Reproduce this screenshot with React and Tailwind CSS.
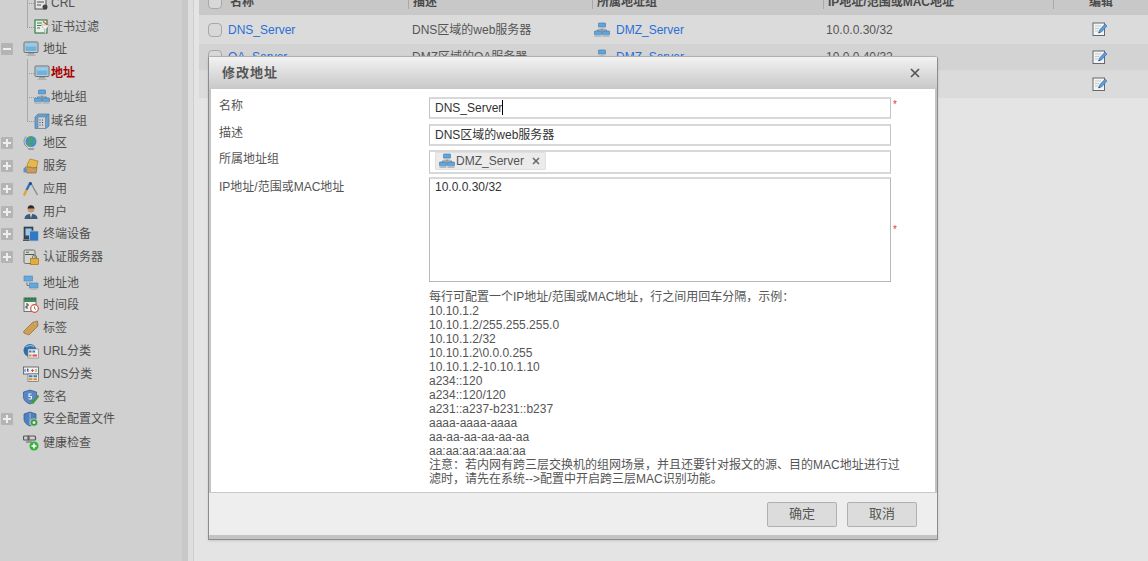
const Frame = ({ children, size = 16 }) => (
  <svg width={size} height={size} viewBox="0 0 16 16" className="shrink-0">
    {children}
  </svg>
);

const MonitorIcon = () => (
  <Frame>
    <rect x="1" y="1" width="14" height="10.500" rx="1" fill="#c8ccd0" stroke="#6b7378" />
    <rect x="2.500" y="2.500" width="11" height="7.500" fill="#6fb2dc" />
    <rect x="2.500" y="2.500" width="11" height="3" fill="#9accea" />
    <rect x="5" y="12" width="6" height="1.500" fill="#9aa0a4" />
    <rect x="3.500" y="13.500" width="9" height="1.500" fill="#aeb2b5" />
  </Frame>
);

const GroupIcon = () => (
  <Frame>
    <rect x="4.500" y="1" width="7" height="4" rx=".5" fill="#5fa6de" stroke="#41749f" strokeWidth=".6" />
    <rect x="4.500" y="5" width="7" height="1.500" fill="#b4bbc0" />
    <path d="M8 6.500v2M3.500 9V8h9v1" stroke="#6f7f8c" fill="none" />
    <rect x=".5" y="9" width="7" height="3.800" rx=".5" fill="#5fa6de" stroke="#41749f" strokeWidth=".6" />
    <rect x=".5" y="12.800" width="7" height="2.200" fill="#b4bbc0" />
    <rect x="8.500" y="9" width="7" height="3.800" rx=".5" fill="#5fa6de" stroke="#41749f" strokeWidth=".6" />
    <rect x="8.500" y="12.800" width="7" height="2.200" fill="#b4bbc0" />
  </Frame>
);

const DomainIcon = () => (
  <Frame>
    <path d="M1 4l3-3h11v12l-3 2.500H1z" fill="#6c9fcc" stroke="#4b7ba6" strokeWidth=".7" />
    <path d="M11.500 4L15 1" stroke="#4b7ba6" strokeWidth=".7" />
    <rect x="4" y="4" width="7.500" height="11.500" fill="#cdd3d8" stroke="#6f7a82" strokeWidth=".6" />
    <path d="M5.500 7h1M8 7h1M5.500 9.500h1M8 9.500h1M5.500 12h1M8 12h1" stroke="#444" />
  </Frame>
);

const GlobeIcon = () => (
  <Frame>
    <circle cx="8" cy="6.500" r="5.500" fill="#3f8fc9" />
    <path d="M5 3c2-1 3 0 3 2s-3 1-3 3 2 2 3 3M10 4c1.500 1 2 2 1 4" stroke="#5fa542" strokeWidth="1.700" fill="none" />
    <path d="M3 1.500a7 7 0 0 0 1.500 11" stroke="#8a8f93" fill="none" />
    <rect x="5" y="13" width="6" height="2" rx=".5" fill="#9c9fa2" />
  </Frame>
);

const FolderIcon = () => (
  <Frame>
    <path d="M4 7l3-6 8 2-1.500 7H5z" fill="#e6b94e" stroke="#a67c24" strokeWidth=".7" />
    <path d="M2 9h6l1 1 5-.5L13 15H4z" fill="#c99c62" stroke="#8f6a38" strokeWidth=".7" />
    <rect x=".5" y="10" width="3" height="4.500" rx=".5" fill="#5c92c4" />
  </Frame>
);

const AppIcon = () => (
  <Frame>
    <path d="M7.500 1.500L14.500 14" stroke="#8a8f93" strokeWidth="1.500" fill="none" />
    <path d="M7.500 1.500L3.500 9" stroke="#2f6fb5" strokeWidth="2.400" fill="none" />
    <path d="M3.500 9L1 14.500" stroke="#e0a52c" strokeWidth="2.400" />
    <circle cx="7.500" cy="2.500" r="1.500" fill="#1f4f8a" />
  </Frame>
);

const UserIcon = () => (
  <Frame>
    <circle cx="8" cy="5" r="3.500" fill="#c49a78" />
    <path d="M4.500 4.500C5 0 11 0 11.500 4.500z" fill="#2d2a28" />
    <path d="M1.500 15c0-4 3-5 6.500-5s6.500 1 6.500 5z" fill="#3f5b7c" />
    <path d="M7 10h2l-1 4z" fill="#e8e8e8" />
  </Frame>
);

const TerminalIcon = () => (
  <Frame>
    <rect x="1" y="1" width="9" height="12" fill="#2e4a66" stroke="#333" strokeWidth=".6" />
    <rect x="2.500" y="2.500" width="6" height="7" fill="#9ec6e4" />
    <rect x="6.500" y="5" width="9" height="10" rx="1" fill="#2f7ac2" stroke="#b4c4d0" strokeWidth=".8" />
    <rect x="0" y="13.500" width="6.500" height="1.500" fill="#555" />
  </Frame>
);

const AuthIcon = () => (
  <Frame>
    <rect x="1" y="1" width="11" height="13.500" rx="1.500" fill="#d4d6d2" stroke="#555" strokeWidth=".8" />
    <path d="M2 5.500h9" stroke="#555" />
    <path d="M3 3.300h3" stroke="#3f9a42" strokeWidth="1.200" />
    <rect x="7.500" y="9.500" width="8" height="6" fill="#e1ae33" stroke="#8f6a18" strokeWidth=".6" />
    <path d="M9.500 9.500V8a2 2 0 0 1 4 0v1.500" stroke="#777" fill="none" />
  </Frame>
);

const PoolIcon = () => (
  <Frame>
    <rect x="1" y="1" width="8.500" height="5" fill="#64a8dc" stroke="#4b84b3" strokeWidth=".6" />
    <rect x="2" y="6" width="6.500" height="1.500" fill="#b3b8bb" />
    <rect x="6.500" y="8" width="8.500" height="5" fill="#64a8dc" stroke="#4b84b3" strokeWidth=".6" />
    <rect x="7.500" y="13" width="6.500" height="2" fill="#b3b8bb" />
    <path d="M4 7.500v3h2.500" stroke="#5f7a8c" fill="none" />
  </Frame>
);

const CalendarIcon = () => (
  <Frame>
    <rect x="1" y="1" width="12" height="13.500" fill="#eef0ee" stroke="#444" strokeWidth=".7" />
    <rect x="1" y="1" width="12" height="4" fill="#3e8a58" />
    <path d="M3 2.500v-2M6 2.500v-2M9 2.500v-2M12 2.500v-2" stroke="#333" strokeWidth=".7" />
    <path d="M3 7h2v2H3v2h2" stroke="#333" fill="none" strokeWidth=".9" />
    <circle cx="11.500" cy="11.500" r="3.800" fill="#fff" stroke="#d0533c" strokeWidth="1.200" />
    <path d="M11.500 9.500v2l1.500 1" stroke="#555" fill="none" strokeWidth=".8" />
  </Frame>
);

const TagIcon = () => (
  <Frame>
    <path d="M1 11L9.500 2.500 14.500 1l.5 5-8.500 8.500a1.500 1.500 0 0 1-2 0L1 13a1.500 1.500 0 0 1 0-2z" fill="#cf9f56" stroke="#916a2c" strokeWidth=".7" />
    <circle cx="12" cy="4" r="1.200" fill="#eee" stroke="#7a5a28" strokeWidth=".5" />
  </Frame>
);

const UrlIcon = () => (
  <Frame>
    <circle cx="7" cy="7.500" r="6.500" fill="#2e6fa8" />
    <path d="M3 4c3-2 6-2 8 0" stroke="#7fb3d9" strokeWidth="1.500" fill="none" />
    <rect x="5" y="6" width="10.500" height="9" fill="#eee" stroke="#777" strokeWidth=".6" />
    <path d="M6 8.500h2.500M9.500 8.500H12" stroke="#3b7fc0" strokeWidth="2" />
    <path d="M6 12.500h2.500" stroke="#e08a2c" strokeWidth="2" />
    <path d="M9.500 12.500H14" stroke="#d9563a" strokeWidth="2" />
  </Frame>
);

const DnsIcon = () => (
  <Frame>
    <rect x=".5" y="1" width="15" height="7" fill="#f0f0f0" stroke="#444" strokeWidth=".7" />
    <path d="M2 3v3M4 3h1v3" stroke="#2f5fa8" strokeWidth=".9" />
    <path d="M8 4.500h3M9.500 3v3" stroke="#d8433a" strokeWidth=".9" />
    <path d="M13 3v3" stroke="#3f9a42" strokeWidth=".9" />
    <rect x="5" y="8" width="10.500" height="7.500" fill="#eee" stroke="#555" strokeWidth=".6" />
    <path d="M6 10.300h3.500M10.500 10.300H14" stroke="#3b7fc0" strokeWidth="2" />
    <path d="M6 13.300h3.500M10.500 13.300H14" stroke="#e08a2c" strokeWidth="2" />
  </Frame>
);

const SignIcon = () => (
  <Frame>
    <path d="M7 1l6.500 2v5c0 3.500-3.500 6-6.500 7-3-1-6.500-3.500-6.500-7V3z" fill="#5a86c6" stroke="#2f568f" strokeWidth=".7" />
    <path d="M8.500 5H6v2.500h2.500V10H5.500" stroke="#e8eef8" fill="none" strokeWidth="1.100" />
    <path d="M8 11l2 2.500L15.500 6.500" stroke="#3f9a42" strokeWidth="2.200" fill="none" />
  </Frame>
);

const ShieldIcon = () => (
  <Frame>
    <path d="M7 1l6 2v5c0 3.500-3 6-6 7-3-1-6-3.500-6-7V3z" fill="#4f7fbf" stroke="#2f568f" strokeWidth=".7" />
    <path d="M7 2v12" stroke="#9fbde3" strokeWidth="1" />
    <circle cx="11" cy="11.500" r="3.800" fill="#3a9a3f" stroke="#e8e8e8" strokeWidth=".6" />
    <circle cx="11" cy="11.500" r="1.500" fill="#e8e8e8" />
  </Frame>
);

const HealthIcon = () => (
  <Frame>
    <rect x=".5" y="1" width="5.500" height="4" rx="1" fill="none" stroke="#555" strokeWidth="1.200" />
    <rect x="5" y="1" width="7.500" height="4" rx="1" fill="none" stroke="#555" strokeWidth="1.200" />
    <path d="M3 7h6" stroke="#777" strokeWidth="1.200" />
    <circle cx="11" cy="11" r="4.500" fill="#35b03c" />
    <path d="M11 8.500v5M8.500 11h5" stroke="#fff" strokeWidth="1.600" />
  </Frame>
);

const CertIcon = () => (
  <Frame>
    <rect x="1" y="1" width="12" height="13" fill="#e8efe6" stroke="#3b7f4c" strokeWidth="1.200" />
    <path d="M3 4h5M3 6.500h4M3 9h3" stroke="#3b7f4c" />
    <path d="M7 6h8.500l-3.500 4v5l-1.500-1v-4z" fill="#f4f4f4" stroke="#888" strokeWidth=".5" />
    <path d="M9 2.500l4 3" stroke="#d8433a" strokeWidth="1.200" />
  </Frame>
);

const CrlIcon = () => (
  <Frame>
    <rect x="1" y="1" width="11" height="13" fill="#e4e4e4" stroke="#555" />
    <path d="M3 4h7M3 7h7M3 10h4" stroke="#555" />
    <circle cx="11" cy="12" r="2.500" fill="#444" />
  </Frame>
);

const EditIcon = () => (
  <svg width="16" height="16" viewBox="0 0 16 16" className="shrink-0 -mt-px">
    <rect x="1" y="2" width="11.500" height="12.500" fill="#f4f4f4" stroke="#5f6a72" />
    <path d="M3 5h6M3 7.500h4M3 10h3" stroke="#c5c8ca" />
    <path d="M6.500 12l1-3L13 3l2 2-5.500 6z" fill="#5d9ad6" stroke="#3a6ea3" strokeWidth=".6" />
    <path d="M6.500 12l1-1.200.5.700z" fill="#222" />
  </svg>
);

const Toggle = ({ open }) => (
  <span className="w-3 h-3 bg-[#b4b4b4] rounded-[1px] flex items-center justify-center relative shrink-0">
    <span className="block w-2 h-0.5 bg-[#eeeeee]" />
    {!open && <span className="absolute block w-0.5 h-2 bg-[#eeeeee]" />}
  </span>
);

const TopRow = ({ label, icon, toggle, open, mt }) => (
  <div className={`flex items-center h-5 ${mt}`}>
    <span className="w-[23px] pl-px shrink-0">{toggle && <Toggle open={open} />}</span>
    <span className="w-[20px] shrink-0">{icon}</span>
    <span>{label}</span>
  </div>
);

const ChildRow = ({ label, icon, active, last, mt }) => (
  <div className={`flex items-center h-5 pl-[27px] relative ${mt}`}>
    <span className={`w-px bg-[#a8a8a8] absolute left-[27px] -top-[4px] ${last ? "h-[14px]" : "h-6"}`} />
    <span className="w-[7px] border-t border-dotted border-[#9a9a9a] shrink-0" />
    <span className="w-[17px] shrink-0">{icon}</span>
    <span className={active ? "font-bold text-[#a80000]" : ""}>{label}</span>
  </div>
);

const lowerRows = [
  { label: "地区", icon: <GlobeIcon />, toggle: true, mt: "mt-[2px]" },
  { label: "服务", icon: <FolderIcon />, toggle: true, mt: "mt-[3px]" },
  { label: "应用", icon: <AppIcon />, toggle: true, mt: "mt-[3px]" },
  { label: "用户", icon: <UserIcon />, toggle: true, mt: "mt-[3px]" },
  { label: "终端设备", icon: <TerminalIcon />, toggle: true, mt: "mt-[2px]" },
  { label: "认证服务器", icon: <AuthIcon />, toggle: true, mt: "mt-[3px]" },
  { label: "地址池", icon: <PoolIcon />, mt: "mt-[6px]" },
  { label: "时间段", icon: <CalendarIcon />, mt: "mt-[2px]" },
  { label: "标签", icon: <TagIcon />, mt: "mt-[3px]" },
  { label: "URL分类", icon: <UrlIcon />, mt: "mt-[3px]" },
  { label: "DNS分类", icon: <DnsIcon />, mt: "mt-[3px]" },
  { label: "签名", icon: <SignIcon />, mt: "mt-[3px]" },
  { label: "安全配置文件", icon: <ShieldIcon />, toggle: true, mt: "mt-[2px]" },
  { label: "健康检查", icon: <HealthIcon />, mt: "mt-[4px]" },
];

const Sidebar = () => (
  <aside className="w-[182px] shrink-0 bg-[#d0d0d0] -mt-[7px] text-[#4f4f4f]">
    <ChildRow label="CRL" icon={<CrlIcon />} />
    <ChildRow label="证书过滤" icon={<CertIcon />} last mt="mt-[4px]" />
    <TopRow label="地址" icon={<MonitorIcon />} toggle open mt="mt-[2px]" />
    <ChildRow label="地址" icon={<MonitorIcon />} active mt="mt-[4px]" />
    <ChildRow label="地址组" icon={<GroupIcon />} mt="mt-[4px]" />
    <ChildRow label="域名组" icon={<DomainIcon />} last mt="mt-[4px]" />
    {lowerRows.map(r => (
      <TopRow key={r.label} {...r} />
    ))}
  </aside>
);

const tableRows = [
  { name: "DNS_Server", desc: "DNS区域的web服务器", group: "DMZ_Server", ip: "10.0.0.30/32", h: "h-[29px]", bg: "bg-[#dbdbdb]" },
  { name: "OA_Server", desc: "DMZ区域的OA服务器", group: "DMZ_Server", ip: "10.0.0.40/32", h: "h-[26px]", bg: "bg-[#d3d3d3]" },
  { name: "", desc: "", group: "", ip: "", h: "h-[28px]", bg: "bg-[#dbdbdb]" },
];

const Table = () => (
  <div className="ml-[5px] flex-1 min-w-0">
    <div className="flex h-[15px] items-end bg-[#c8c8c8] pb-[6px] font-bold text-[#4a4a4a] overflow-hidden">
      <span className="w-[209px] pl-[9px] flex items-center gap-2 shrink-0 leading-[14px]">
        <span className="w-[14px] h-[14px] rounded-sm border border-[#a8a8a8] bg-[#d8d8d8]" />
        名称
      </span>
      <span className="w-[184px] pl-1 border-l border-[#a8a8a8] shrink-0 leading-[14px]">描述</span>
      <span className="w-[231px] pl-1 border-l border-[#a8a8a8] shrink-0 leading-[14px]">所属地址组</span>
      <span className="w-[230px] pl-1 border-l border-[#a8a8a8] shrink-0 leading-[14px]">IP地址/范围或MAC地址</span>
      <span className="flex-1 text-center border-l border-[#a8a8a8] leading-[14px]">编辑</span>
    </div>
    {tableRows.map((r, i) => (
      <div key={i} className={`flex items-center ${r.h} ${r.bg} text-[#555555]`}>
        <span className="w-[209px] pl-[9px] flex items-center gap-[6px] shrink-0 text-[#2a6fd6]">
          {r.name && <span className="w-[14px] h-[14px] rounded-sm border border-[#a8a8a8] bg-[#d8d8d8]" />}
          {r.name}
        </span>
        <span className="w-[184px] pl-1 shrink-0">{r.desc}</span>
        <span className="w-[231px] pl-[2px] shrink-0 flex items-center gap-[6px] text-[#2a6fd6]">
          {r.group && <GroupIcon />}
          {r.group}
        </span>
        <span className="w-[230px] pl-[3px] shrink-0">{r.ip}</span>
        <span className="flex-1 flex justify-center -ml-[2px]">
          <EditIcon />
        </span>
      </div>
    ))}
  </div>
);

const hints = [
  "10.10.1.2",
  "10.10.1.2/255.255.255.0",
  "10.10.1.2/32",
  "10.10.1.2\\0.0.0.255",
  "10.10.1.2-10.10.1.10",
  "a234::120",
  "a234::120/120",
  "a231::a237-b231::b237",
  "aaaa-aaaa-aaaa",
  "aa-aa-aa-aa-aa-aa",
  "aa:aa:aa:aa:aa:aa",
];

const Field = ({ label, h, mb, required, children }) => (
  <div className={`flex ${mb}`}>
    <label className="w-[210px] shrink-0 text-[#555555] leading-[16px] mt-px">{label}</label>
    <div className={`w-[462px] ${h} shrink-0 border border-[#c4c4c4] border-y-2 border-y-[#d8d8d8] bg-white px-[5px] text-[#333333] flex items-start`}>
      {children}
    </div>
    {required && <span className="text-[#f03040] text-[10px] ml-[2px] leading-[16px]">*</span>}
  </div>
);

const Modal = () => (
  <div className="absolute left-[208px] top-[56px] w-[730px] h-[484px] bg-[#c4c4c4] rounded-t-[3px] border border-[#8c8c8c] border-t-[#b0b0b0] shadow-sm flex flex-col">
    <div className="h-[32px] shrink-0 flex items-center justify-between pl-[13px] pr-[17px] bg-gradient-to-b from-[#f2f2f2] to-[#c8c8c8] font-bold text-[13px] text-[#555555] tracking-[1px]">
      修改地址
      <svg width="10" height="10" viewBox="0 0 10 10">
        <path d="M1 1l8 8M9 1l-8 8" stroke="#555555" strokeWidth="1.700" />
      </svg>
    </div>
    <div className="mx-[2px] h-[403px] bg-white pt-[8px] pl-[8px] shrink-0">
      <Field label="名称" h="h-[22px]" mb="mb-[5px]" required>
        <span className="border-r border-black h-[15px] mt-px flex items-center">DNS_Server</span>
      </Field>
      <Field label="描述" h="h-[22px]" mb="mb-[4px]">
        <span className="leading-[16px] mt-px">DNS区域的web服务器</span>
      </Field>
      <Field label="所属地址组" h="h-[24px]" mb="mb-[3px]">
        <span className="h-[18px] flex items-center gap-px bg-[#ebebeb] border border-[#e0e0e0] pl-[3px] pr-[5px] text-[#555555] rounded-[1px]">
          <GroupIcon />
          DMZ_Server
          <svg width="8" height="8" viewBox="0 0 8 8" className="ml-[7px]">
            <path d="M1 1l6 6M7 1L1 7" stroke="#666666" strokeWidth="1.500" />
          </svg>
        </span>
      </Field>
      <div className="flex">
        <label className="w-[210px] shrink-0 text-[#555555] leading-[16px] mt-[2px]">IP地址/范围或MAC地址</label>
        <div className="w-[462px] h-[105px] shrink-0 border border-[#b8b8b8] border-t-2 border-t-[#d8d8d8] bg-white px-[5px] text-[#333333] leading-[16px]">
          10.0.0.30/32
        </div>
        <span className="self-center text-[#f03040] text-[10px] ml-[2px]">*</span>
      </div>
      <div className="ml-[210px] mt-[8px] w-[480px] text-[#555555] leading-[14px]">
        <div>每行可配置一个IP地址/范围或MAC地址，行之间用回车分隔，示例：</div>
        {hints.map(h => (
          <div key={h}>{h}</div>
        ))}
        <div>注意：若内网有跨三层交换机的组网场景，并且还要针对报文的源、目的MAC地址进行过滤时，请先在系统--&gt;配置中开启跨三层MAC识别功能。</div>
      </div>
    </div>
    <div className="h-[43px] shrink-0 bg-[#eeeeee] border-t border-[#c8c8c8] flex justify-end items-center gap-[10px] pr-5">
      <button className="w-[70px] h-[25px] bg-[#dcdcdc] border border-[#b0b0b0] rounded-[2px] text-[13px] text-[#555555]">确定</button>
      <button className="w-[70px] h-[25px] bg-[#dcdcdc] border border-[#b0b0b0] rounded-[2px] text-[13px] text-[#555555]">取消</button>
    </div>
  </div>
);

export default function App() {
  return (
    <div
      className="relative flex w-full h-[561px] overflow-hidden bg-[#e4e4e4] text-[12px]"
      style={{ fontFamily: '"Liberation Sans", "Noto Sans CJK SC", sans-serif' }}
    >
      <Sidebar />
      <div className="w-[6px] shrink-0 bg-[#c8c8c8]" />
      <div className="w-[5px] shrink-0 bg-[#dedede]" />
      <div className="w-px shrink-0 bg-[#cfcfcf]" />
      <Table />
      <Modal />
    </div>
  );
}
